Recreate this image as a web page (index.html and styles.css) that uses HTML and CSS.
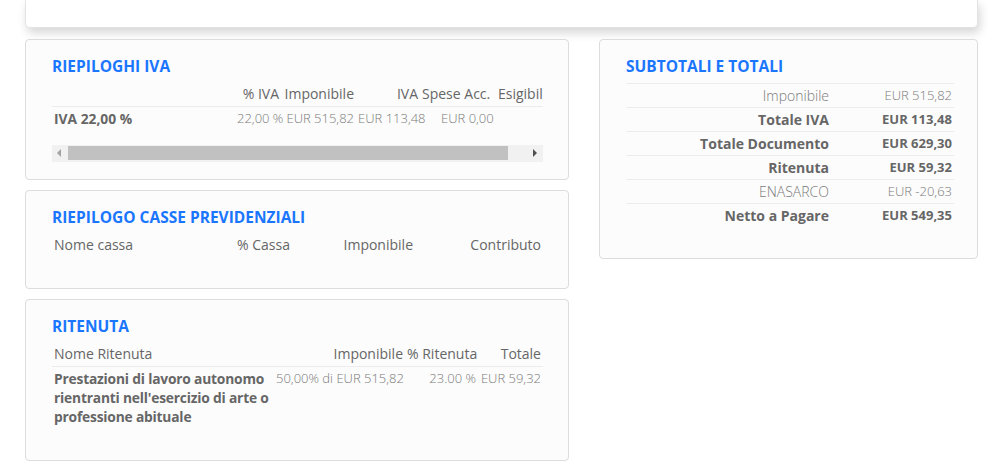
FILE: index.html
```html
<!DOCTYPE html>
<html lang="it">
<head>
<meta charset="utf-8">
<title>Riepiloghi</title>
<link rel="stylesheet" href="styles.css">
</head>
<body>
<div class="page">
  <div class="topcard"></div>
  <div class="grid">
    <div class="col">
      <section class="card card-iva">
        <h2 class="title">RIEPILOGHI IVA</h2>
        <div class="scroll">
          <table class="tbl tbl-iva">
            <colgroup>
              <col style="width:183px"><col style="width:46px"><col style="width:75px"><col style="width:64px"><col style="width:76px"><col style="width:90px">
            </colgroup>
            <thead>
              <tr><th class="l"></th><th class="r">% IVA</th><th class="r">Imponibile</th><th class="r">IVA</th><th class="l">Spese Acc.</th><th class="l">Esigibilità</th></tr>
            </thead>
            <tbody>
              <tr><td class="l b">IVA 22,00 %</td><td class="r">22,00 %</td><td class="r">EUR 515,82</td><td class="r">EUR 113,48</td><td class="l pad">EUR 0,00</td><td></td></tr>
            </tbody>
          </table>
        </div>
        <div class="hscroll">
          <span class="arrow arrow-l"></span>
          <span class="thumb"></span>
          <span class="arrow arrow-r"></span>
        </div>
      </section>

      <section class="card card-casse">
        <h2 class="title">RIEPILOGO CASSE PREVIDENZIALI</h2>
        <table class="tbl tbl-casse">
          <colgroup>
            <col style="width:148px"><col style="width:92px"><col style="width:123px"><col style="width:128px">
          </colgroup>
          <thead>
            <tr><th class="l">Nome cassa</th><th class="r">% Cassa</th><th class="r">Imponibile</th><th class="r">Contributo</th></tr>
          </thead>
        </table>
      </section>

      <section class="card card-rit">
        <h2 class="title">RITENUTA</h2>
        <table class="tbl tbl-rit">
          <colgroup>
            <col style="width:222px"><col style="width:131px"><col style="width:73px"><col style="width:65px">
          </colgroup>
          <thead>
            <tr><th class="l">Nome Ritenuta</th><th class="r">Imponibile</th><th class="r">% Ritenuta</th><th class="r">Totale</th></tr>
          </thead>
          <tbody>
            <tr><td class="l b">Prestazioni di lavoro autonomo rientranti nell'esercizio di arte o professione abituale</td><td class="r">50,00% di EUR 515,82</td><td class="r">23.00 %</td><td class="r">EUR 59,32</td></tr>
          </tbody>
        </table>
      </section>
    </div>

    <div class="col">
      <section class="card card-tot">
        <h2 class="title">SUBTOTALI E TOTALI</h2>
        <table class="tbl tbl-tot">
          <colgroup><col style="width:206px"><col style="width:122px"></colgroup>
          <tbody>
            <tr class="light"><td>Imponibile</td><td class="n">EUR 515,82</td></tr>
            <tr class="bold"><td>Totale IVA</td><td class="n">EUR 113,48</td></tr>
            <tr class="bold"><td>Totale Documento</td><td class="n">EUR 629,30</td></tr>
            <tr class="bold"><td>Ritenuta</td><td class="n">EUR 59,32</td></tr>
            <tr class="light"><td>ENASARCO</td><td class="n">EUR -20,63</td></tr>
            <tr class="bold"><td>Netto a Pagare</td><td class="n">EUR 549,35</td></tr>
          </tbody>
        </table>
      </section>
    </div>
  </div>
</div>
</body>
</html>
```

FILE: styles.css
```css
* { box-sizing: border-box; }
html, body { margin: 0; padding: 0; background: #ffffff; }
body {
  font-family: "Open Sans", "Liberation Sans", sans-serif;
  color: #666;
  font-size: 13px;
}
.page {
  padding: 0 14px 0 25px;
  width: 992px;
  overflow: hidden;
}
.topcard {
  height: 28px;
  width: 953px;
  background: #fff;
  border: 1px solid #e3e3e3;
  border-top: none;
  border-radius: 0 0 5px 5px;
  box-shadow: 2px 5px 10px rgba(0,0,0,0.16);
  margin-bottom: 11px;
}
.grid {
  display: grid;
  grid-template-columns: 544px 379px;
  column-gap: 30px;
  align-items: start;
}
.col {
  display: flex;
  flex-direction: column;
  gap: 10px;
}
.card {
  background: #fcfcfc;
  border: 1px solid #dcdcdc;
  border-radius: 4px;
  padding: 14px 25px 16px 26px;
}
.title {
  margin: 0 0 4px;
  font-size: 15.5px;
  line-height: 24px;
  font-weight: 700;
  color: #1a76ff;
}
.tbl {
  border-collapse: collapse;
  table-layout: fixed;
}
.tbl th, .tbl td {
  padding: 0 2px;
  white-space: nowrap;
}
.tbl th {
  font-size: 14px;
  font-weight: 400;
  color: #666;
  height: 24px;
  line-height: 24px;
}
.tbl td {
  font-size: 13px;
  font-weight: 300;
  color: #7a7a7a;
  line-height: 19px;
  vertical-align: top;
  padding-top: 2px;
}
.tbl td.b {
  font-size: 13.8px;
  font-weight: 700;
  color: #666;
}
.l { text-align: left; }
.r { text-align: right; }
.pad { padding-left: 21px !important; }

.tbl-iva thead tr, .tbl-rit thead tr { border-bottom: 1px solid #ececec; }
.scroll {
  width: 491px;
  overflow: hidden;
}
.tbl-iva { width: 534px; }
.tbl-iva td { height: 26px; }
.card-iva { padding-bottom: 17px; }
.hscroll {
  margin-top: 12px;
  width: 491px;
  height: 17px;
  background: #f1f1f1;
  display: flex;
  align-items: center;
  padding: 0 6px 0 5px;
}
.arrow { width: 0; height: 0; border-top: 4px solid transparent; border-bottom: 4px solid transparent; }
.arrow-l { border-right: 4px solid #a3a3a3; }
.arrow-r { border-left: 4px solid #505050; }
.thumb {
  height: 14px;
  width: 440px;
  background: #c1c1c1;
  margin: 0 auto 0 7px;
}
.card-casse { padding-bottom: 31px; }
.card-casse .tbl { width: 491px; }
.card-rit { padding-bottom: 34px; }
.tbl-rit { width: 491px; }
.tbl-rit td.b { white-space: normal; letter-spacing: -0.2px; }

.card-tot { padding-bottom: 30px; }
.card-tot .title { margin-bottom: 5px; }
.tbl-tot { width: 328px; }
.tbl-tot tr { border-top: 1px solid #ececec; }
.tbl-tot td {
  text-align: right;
  height: 24px;
  line-height: 23px;
  padding: 0 2px;
  vertical-align: middle;
  font-size: 14px;
}
.tbl-tot td.n { font-size: 13px; }
.tbl-tot tr.light td { font-weight: 300; color: #7a7a7a; }
.tbl-tot tr.bold td { font-weight: 700; color: #666; }
.tbl-tot td:first-child { padding-right: 3px; }
```
